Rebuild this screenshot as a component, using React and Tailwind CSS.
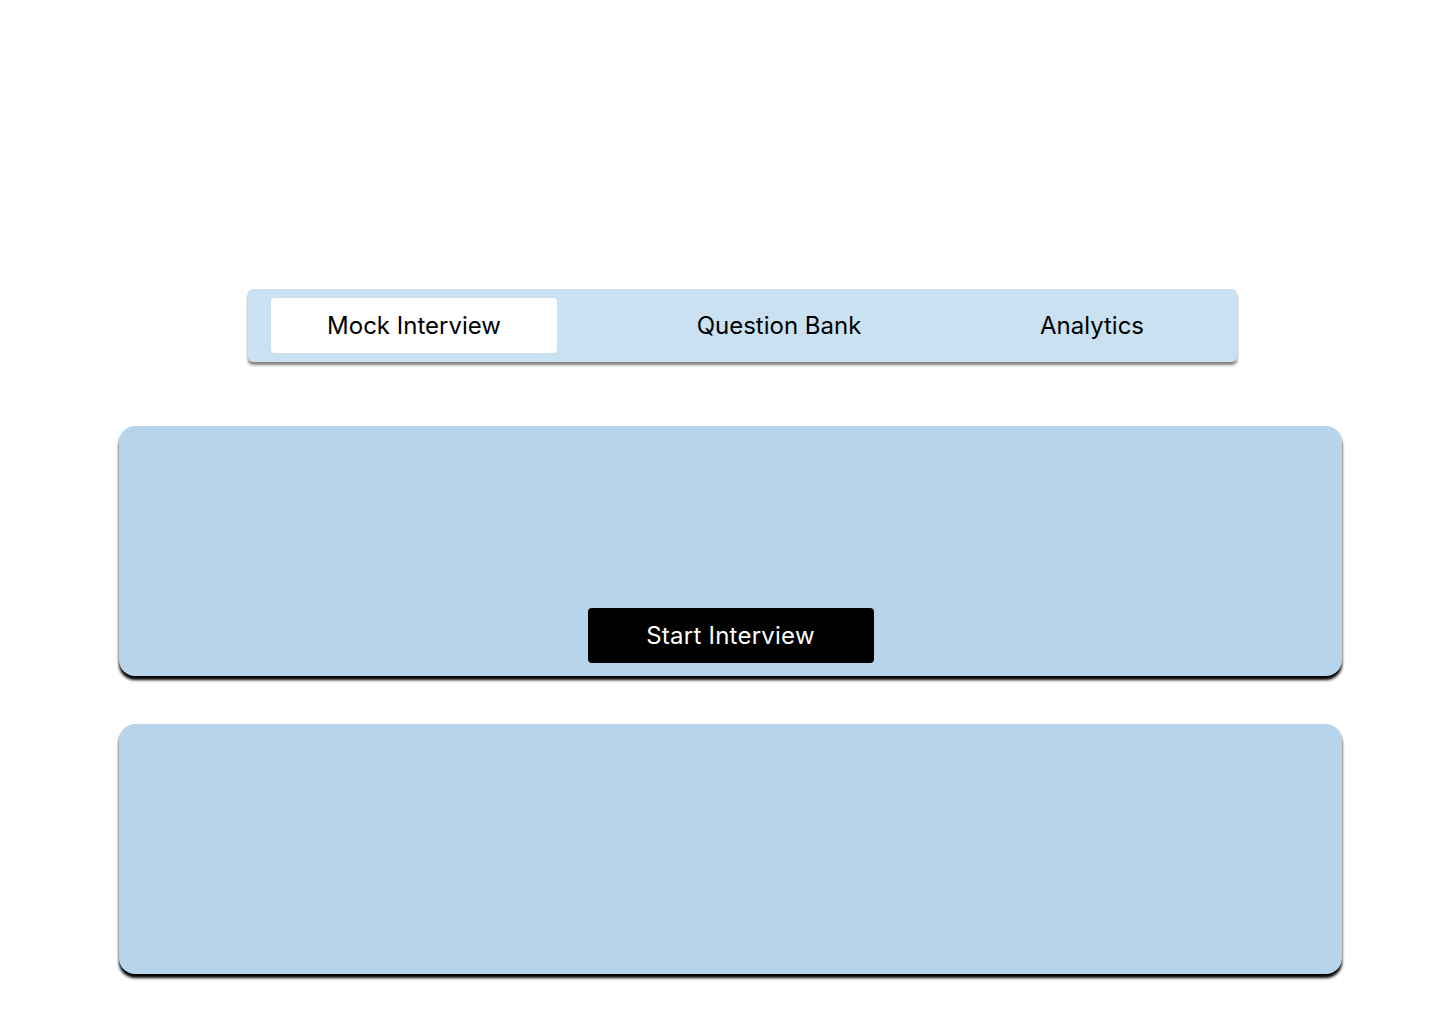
export default function App() {
  return (
    <div className="min-h-[1024px] w-[1440px] bg-white font-['Inter',sans-serif] text-black">
      <div className="pt-[289px] pl-[248px]">
        <div className="w-[989px] h-[73px] bg-[#cae1f1] rounded-[5px] shadow-[0_3px_3px_rgba(0,0,0,0.5)] pl-[23px] py-[9px] grid grid-cols-[286px_444px_182px] items-center">
          <div className="h-[55px] bg-white rounded-[4px] flex items-center justify-center text-[24px]">
            Mock Interview
          </div>
          <div className="flex items-center justify-center text-[24px]">Question Bank</div>
          <div className="flex items-center justify-center text-[24px]">Analytics</div>
        </div>
      </div>

      <div className="mt-[64px] pl-[119px] pr-[98px] flex flex-col gap-[48px]">
        <div className="h-[250px] bg-[#b7d4eb] rounded-[16px] shadow-[0_4px_3px_rgba(0,0,0,1)] flex flex-col justify-end items-center pb-[13px]">
          <button className="w-[286px] h-[55px] bg-black text-white rounded-[4px] text-[24px] tracking-[0.01em]">
            Start Interview
          </button>
        </div>
        <div className="h-[250px] bg-[#b7d4eb] rounded-[16px] shadow-[0_4px_3px_rgba(0,0,0,1)]"></div>
      </div>
    </div>
  );
}
